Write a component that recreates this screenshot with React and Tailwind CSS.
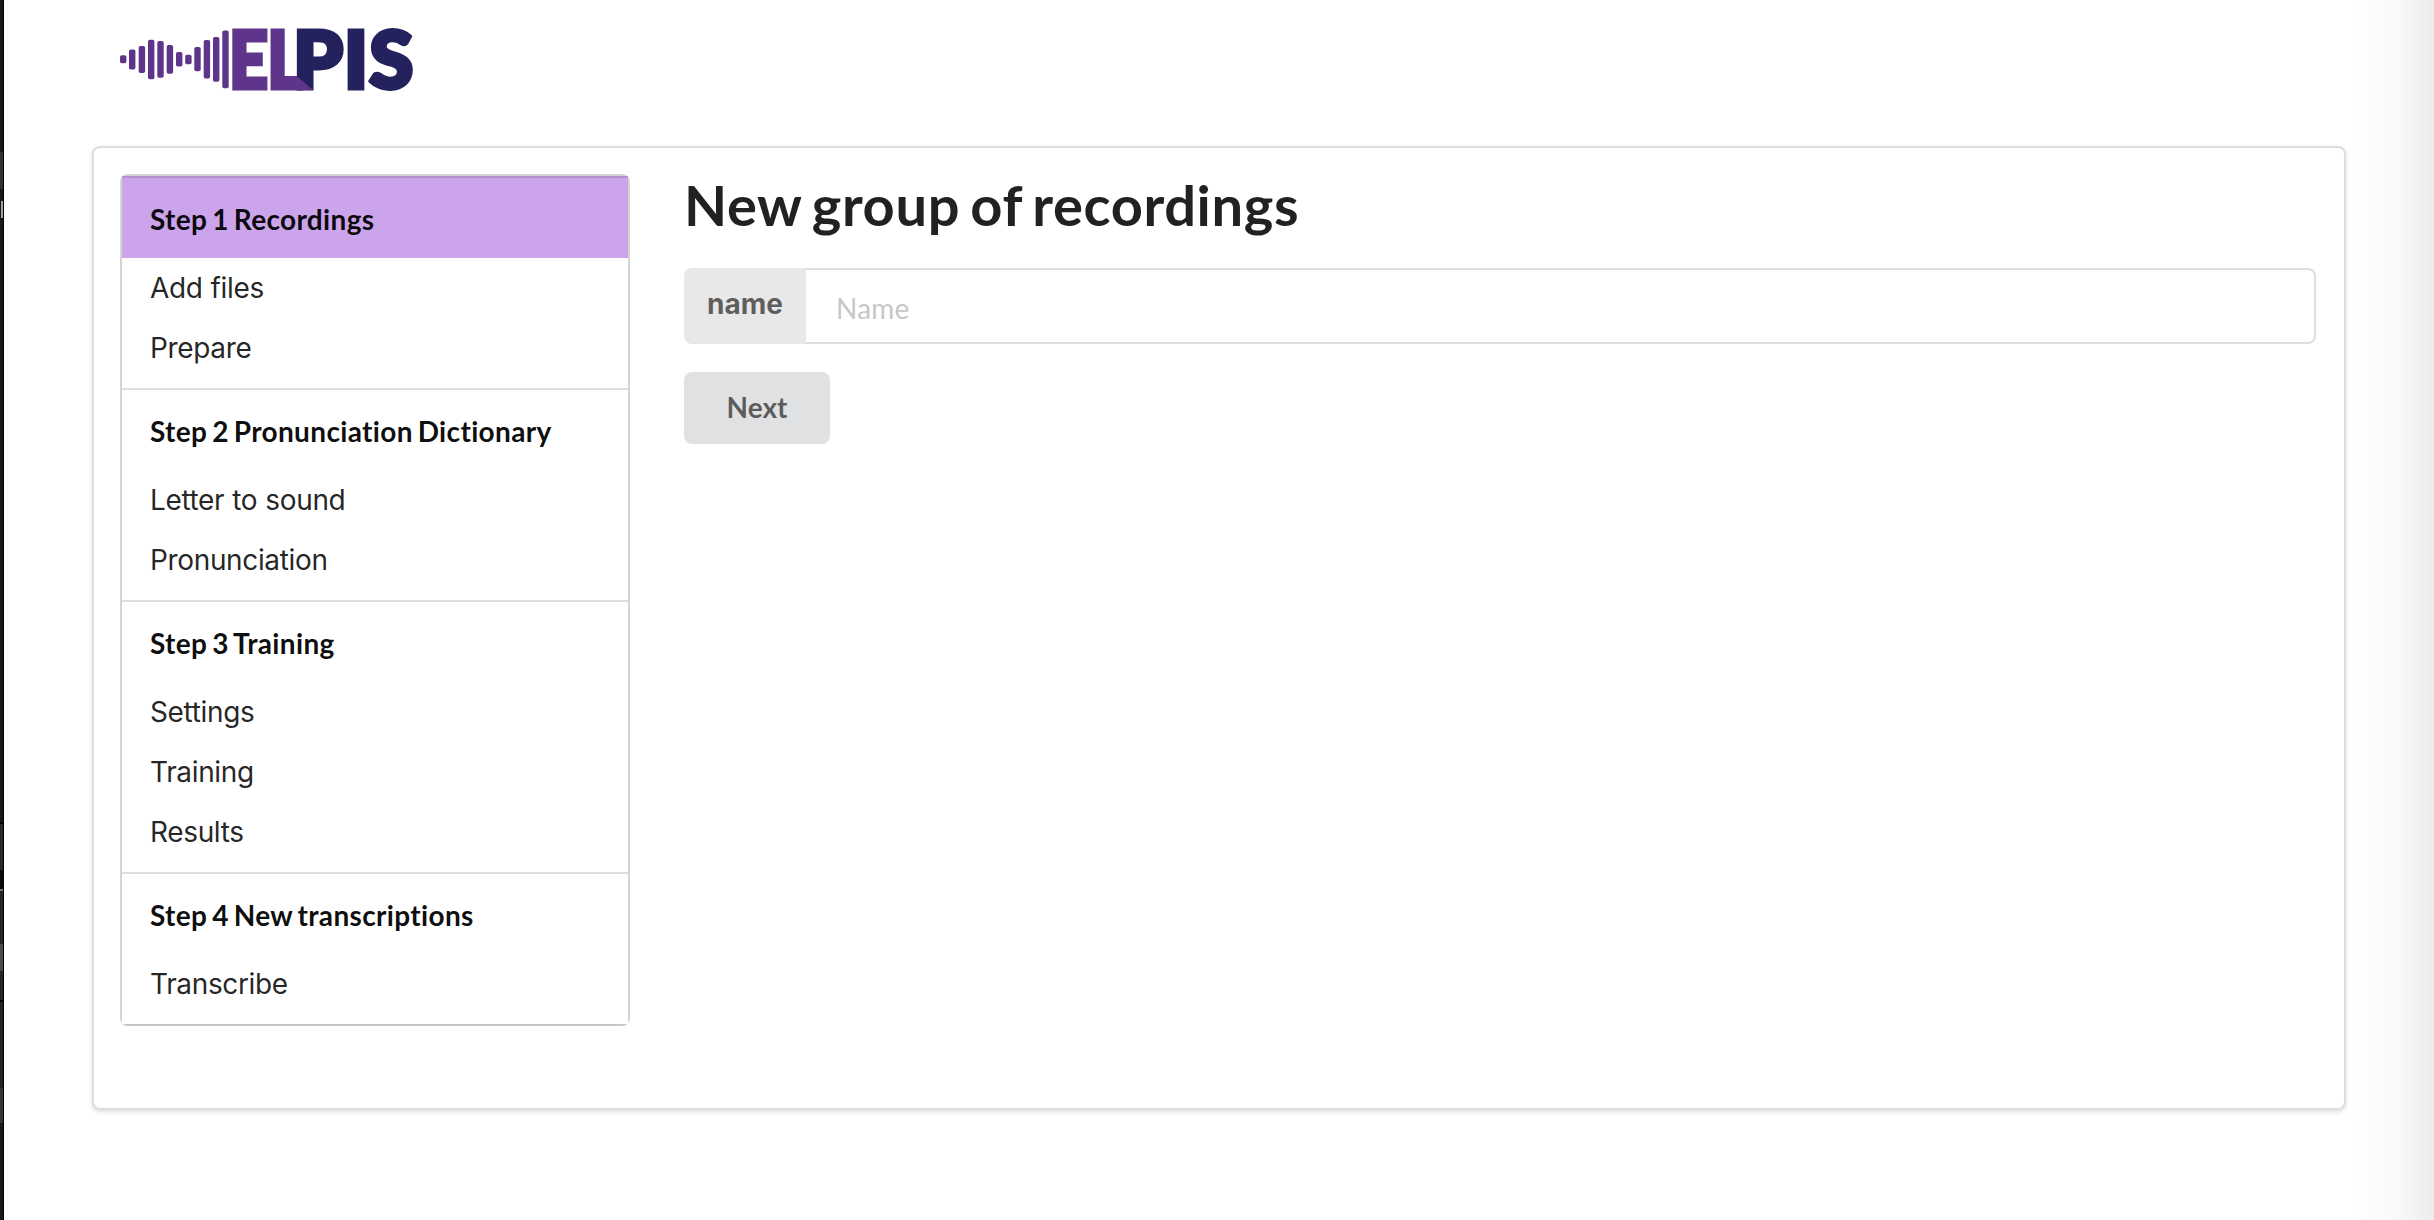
const steps = [
  { title: "Step 1 Recordings", links: ["Add files", "Prepare"], active: true, h: "h-[214px]" },
  { title: "Step 2 Pronunciation Dictionary", links: ["Letter to sound", "Pronunciation"], h: "h-[212px]" },
  { title: "Step 3 Training", links: ["Settings", "Training", "Results"], h: "h-[272px]" },
  { title: "Step 4 New transcriptions", links: ["Transcribe"], h: "h-[150px]" },
];

// Waveform bars of the logo: x, top, bottom
const bars = [
  [20, 45.3, 53.2],
  [29, 39.5, 59.5],
  [38.7, 36, 63],
  [48, 29.8, 69.2],
  [57.3, 31, 67.8],
  [66.7, 35, 63.8],
  [76, 42, 56.5],
  [85.2, 44.8, 54.2],
  [94.3, 37, 61.3],
  [103.7, 30, 68.5],
  [113, 27, 71.8],
  [122.3, 20.5, 78.3],
];

function Logo() {
  return (
    <svg className="block h-[100px] w-[340px] overflow-visible" viewBox="0 0 340 100" role="img" aria-label="ELPIS">
      {bars.map(([x, a, b]) => (
        <rect key={x} x={x} y={a} width="6.4" height={b - a} rx="1.8" fill="#5f348b" />
      ))}
      <g className="font-[Lato,sans-serif] text-[79px] font-black" strokeWidth="4.8" strokeLinejoin="miter">
        <text x="152.2 197.2" y="77.6" transform="scale(0.85 1)" fill="#5f348b" stroke="#5f348b">
          EL
        </text>
        <text x="193.3 244 269.500" y="77.6" fill="#24225d" stroke="#24225d">
          PIS
        </text>
      </g>
      {/* folded corner where the L meets the P */}
      <path fill="#5f348b" d="M196 66.2h1l16 13.8h-17z" />
    </svg>
  );
}

// Sliver of the dark window behind the page's left edge
function WindowEdge() {
  return (
    <div className="flex w-1 shrink-0 flex-col border-r border-black bg-[#1a1916]">
      <div className="mt-[152px] h-[37px] bg-[#33322f]" />
      <div className="mt-[12px] ml-px h-[17px] bg-[#a3a29f]" />
      <div className="mt-[604px] h-[2px] bg-black" />
      <div className="h-[46px] bg-[#2a2927]" />
      <div className="h-[19px] bg-[#0c0b08]" />
      <div className="h-[2px] bg-[#777674]" />
      <div className="h-[53px] bg-[#262523]" />
      <div className="h-[27px] bg-[#4b4a48]" />
      <div className="h-[29px] bg-[#262523]" />
      <div className="h-[2px] bg-black" />
      <div className="h-[86px] bg-[#242321]" />
      <div className="h-[35px] bg-[#353432]" />
    </div>
  );
}

export default function App() {
  return (
    <div className="flex h-[1220px] w-[2434px] overflow-hidden bg-white font-[Lato,sans-serif] text-[28px] text-black/87 [font-variant-ligatures:none]">
      <WindowEdge />
      <div className="flex grow flex-col pl-[88px]">
        <header className="h-[146px] pt-[10px] pl-2">
          <Logo />
        </header>
        <main className="flex h-[964px] w-[2254px] rounded-[8px] border-2 border-[#dededf] bg-white px-[26px] pt-[26px] shadow-[0_2px_4px_0_rgba(34,36,38,0.15)]">
          <nav className="h-[852px] w-[510px] shrink-0 rounded-[8px] border-2 border-[#d4d4d5] border-b-[#c6c6c7]">
            {steps.map((s) => (
              <section key={s.title} className={`${s.h} border-b-2 border-[#dededf] bg-white last:border-b-0`}>
                <h2
                  className={`px-7 pt-6 leading-[34px] font-bold tracking-[0.34px] text-black/95 [word-spacing:-2.2px] ${
                    s.active ? "h-[82px] border-t-2 border-[#b391cc] bg-[#cba4eb]" : "h-[80px]"
                  }`}
                >
                  {s.title}
                </h2>
                <ul className="px-7 font-[Inter,sans-serif] leading-[60px] tracking-[-0.35px] [word-spacing:0.5px]">
                  {s.links.map((l) => (
                    <li key={l}>{l}</li>
                  ))}
                </ul>
              </section>
            ))}
          </nav>
          <section className="ml-[54px] w-[1632px]">
            <h1 className="h-[94px] text-[56px] leading-[62px] font-bold tracking-[0.63px] [word-spacing:-4px]">
              New group of recordings
            </h1>
            <div className="flex h-[76px]">
              <label className="w-[122px] rounded-l-[8px] bg-[#e8e8e8] pt-[19px] text-center font-[Inter,sans-serif] leading-[34px] font-bold text-black/60">
                name
              </label>
              <input
                className="min-w-0 grow rounded-r-[8px] border-2 border-l-0 border-[#dededf] pt-[3px] pl-[30px] tracking-[0.2px] placeholder:text-[#c7c7c7]"
                placeholder="Name"
              />
            </div>
            <button className="mt-7 h-[72px] w-[146px] rounded-[8px] bg-[#e0e1e2] pb-[2px] font-bold text-black/60">
              Next
            </button>
          </section>
        </main>
      </div>
      <div className="w-[78px] shrink-0 bg-gradient-to-r from-white via-[#fafafa] to-[#ececec]" />
    </div>
  );
}
